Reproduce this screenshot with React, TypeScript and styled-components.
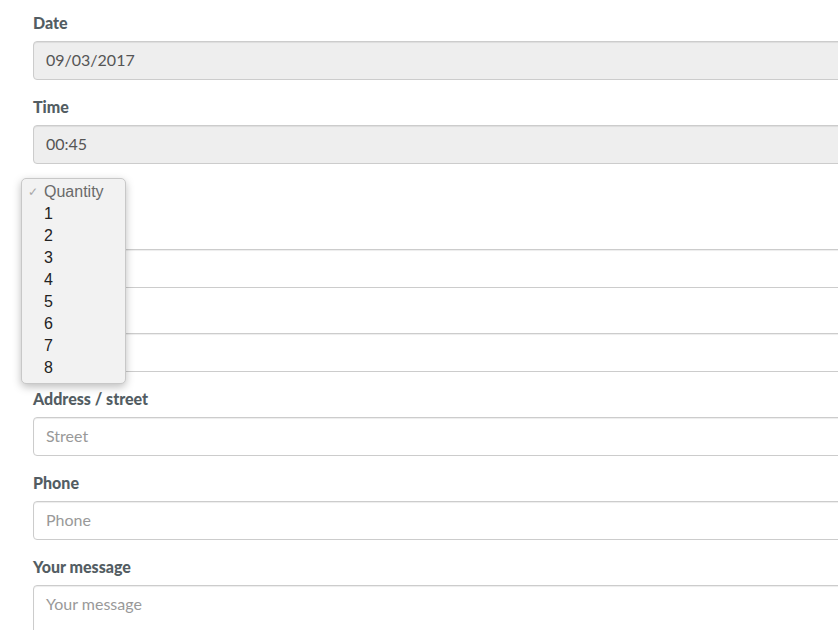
import React from "react"
import styled, { createGlobalStyle } from "styled-components"

const GlobalStyle = createGlobalStyle`
  html, body {
    margin: 0;
    padding: 0;
    background: #fff;
    overflow: hidden;
  }
  body {
    font-family: Lato, "Open Sans", sans-serif;
  }
`

const Page = styled.div`
  position: relative;
  padding: 12px 0 0 33px;
  width: 840px;
`

const Group = styled.div<{ $gap?: number }>`
  display: flex;
  flex-direction: column;
  margin-bottom: ${(p) => p.$gap ?? 16}px;
`

const Label = styled.label`
  display: block;
  min-height: 22px;
  font-size: 16px;
  line-height: 22px;
  font-weight: 900;
  color: #535d63;
  margin-bottom: 7px;
`

const Input = styled.input<{ $readonly?: boolean }>`
  box-sizing: border-box;
  width: 820px;
  height: 39px;
  padding: 0 12px 2px;
  font-family: Lato, "Open Sans", sans-serif;
  font-size: 16px;
  color: #555;
  background: ${(p) => (p.$readonly ? "#eeeeee" : "#fff")};
  border: 1px solid #ccc;
  border-radius: 4px;
  box-shadow: inset 0 1px 1px rgba(0, 0, 0, 0.075);
  outline: none;

  &::placeholder {
    color: #999;
  }
`

const TextArea = styled.textarea`
  box-sizing: border-box;
  width: 820px;
  height: 90px;
  padding: 7px 12px;
  font-family: Lato, "Open Sans", sans-serif;
  font-size: 16px;
  line-height: 22px;
  color: #555;
  background: #fff;
  border: 1px solid #ccc;
  border-radius: 4px;
  box-shadow: inset 0 1px 1px rgba(0, 0, 0, 0.075);
  resize: none;
  outline: none;

  &::placeholder {
    color: #999;
  }
`

const SelectBox = styled.div`
  box-sizing: border-box;
  width: 90px;
  height: 26px;
  border: 1px solid #ccc;
  border-radius: 4px;
  background: #fafafa;
`

const Menu = styled.ul`
  position: absolute;
  left: 21px;
  top: 178px;
  box-sizing: border-box;
  width: 105px;
  height: 206px;
  margin: 0;
  padding: 2px 0 6px;
  list-style: none;
  background: #f2f2f2;
  border: 1px solid #c8c8c8;
  border-radius: 5px;
  box-shadow: 0 3px 9px rgba(0, 0, 0, 0.26);
  font-family: "Liberation Sans", Arial, sans-serif;
  font-size: 16px;
`

const MenuItem = styled.li<{ $muted?: boolean }>`
  position: relative;
  height: 22px;
  line-height: 22px;
  padding-left: 22px;
  color: ${(p) => (p.$muted ? "#6a6a6a" : "#222")};
`

const Check = styled.span`
  position: absolute;
  left: 6px;
  top: 0;
  font-size: 12px;
  color: #a8a8a8;
`

const quantities = [1, 2, 3, 4, 5, 6, 7, 8]

export default function App() {
  return (
    <>
      <GlobalStyle />
      <Page>
        <Group>
          <Label>Date</Label>
          <Input $readonly readOnly value="09/03/2017" />
        </Group>
        <Group>
          <Label>Time</Label>
          <Input $readonly readOnly value="00:45" />
        </Group>
        <Group $gap={14}>
          <SelectBox />
        </Group>
        {/* labels of these two rows sit under the open menu */}
        <Group>
          <Label />
          <Input />
        </Group>
        <Group>
          <Label />
          <Input />
        </Group>
        <Group>
          <Label>Address / street</Label>
          <Input placeholder="Street" />
        </Group>
        <Group>
          <Label>Phone</Label>
          <Input placeholder="Phone" />
        </Group>
        <Group>
          <Label>Your message</Label>
          <TextArea placeholder="Your message" />
        </Group>

        <Menu>
          <MenuItem $muted>
            <Check>✓</Check>Quantity
          </MenuItem>
          {quantities.map((q) => (
            <MenuItem key={q}>{q}</MenuItem>
          ))}
        </Menu>
      </Page>
    </>
  )
}
